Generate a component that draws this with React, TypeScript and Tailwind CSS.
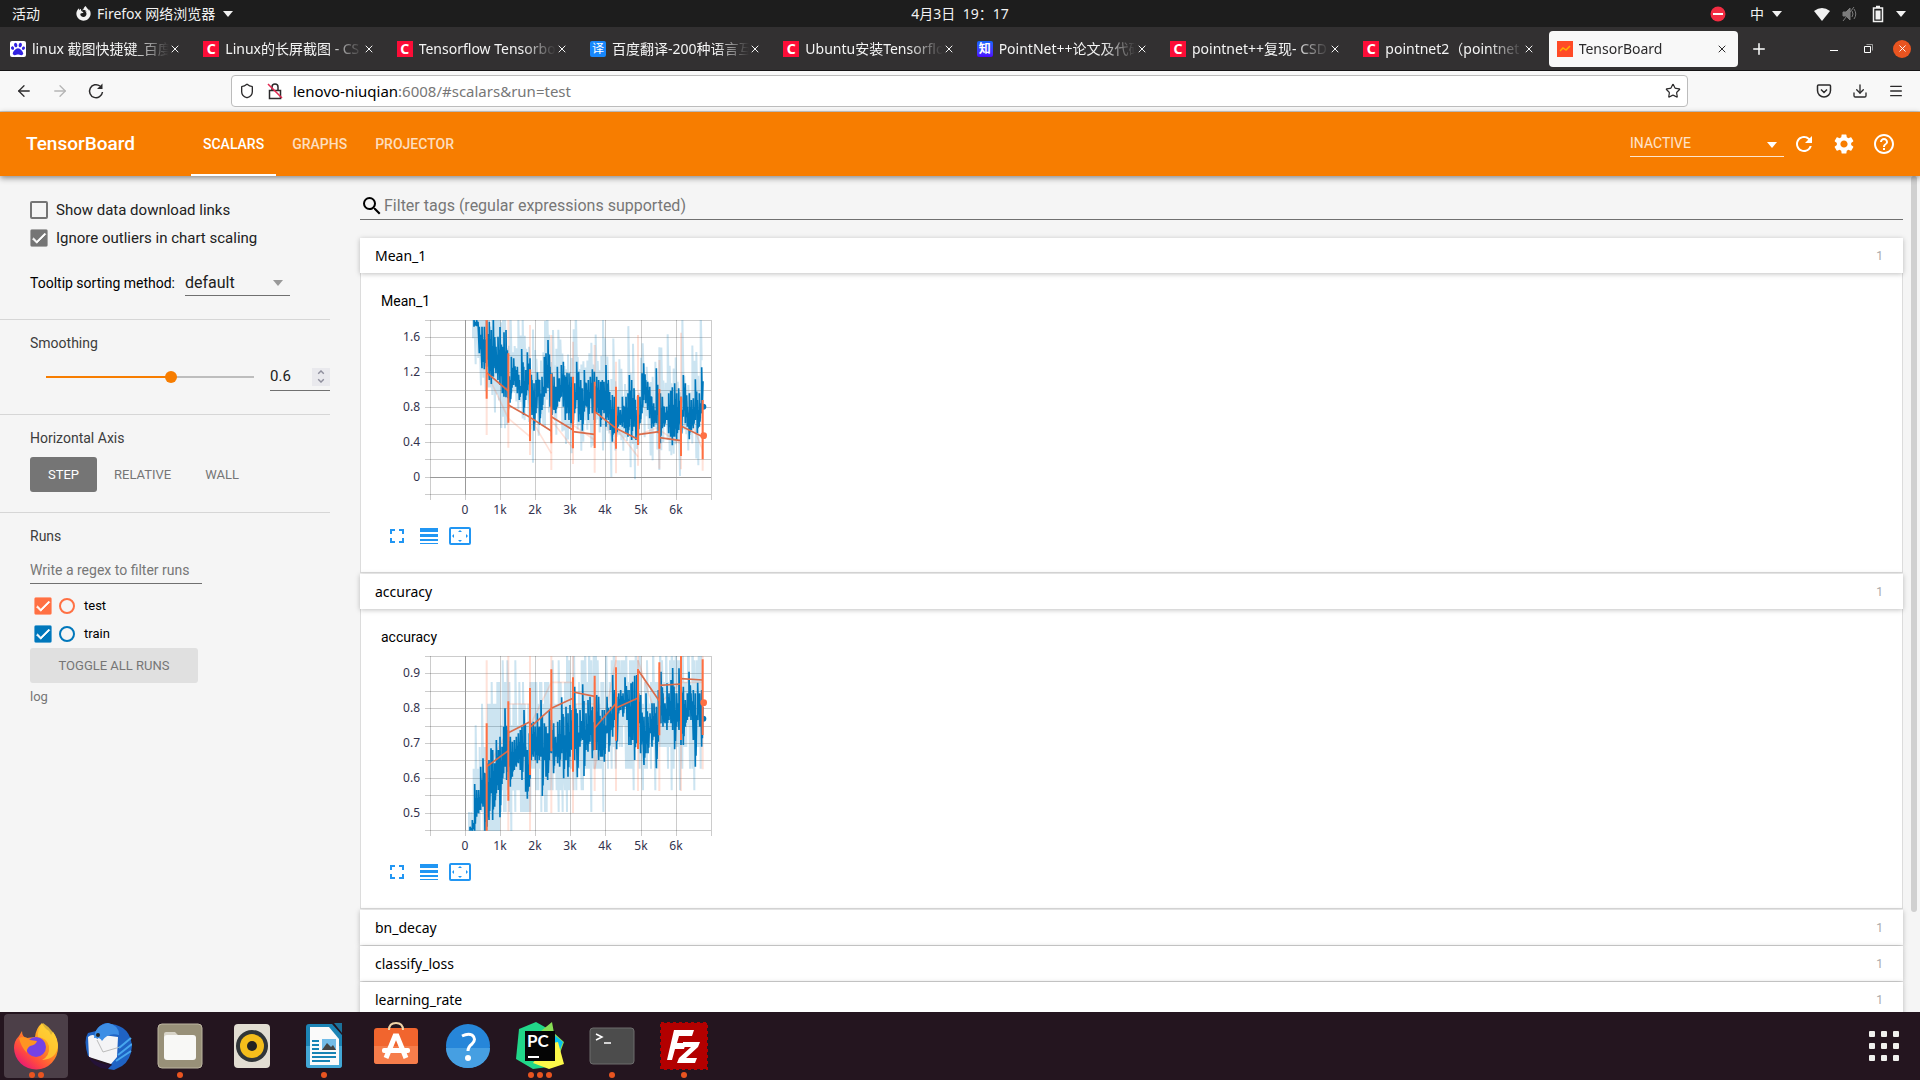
import type { ReactNode } from 'react';
import clsx from 'clsx';
import { ArrowLeft, ArrowRight, Download, Menu, Plus, Shield, Star, X } from 'lucide-react';
import { FaFirefoxBrowser, FaPaw } from 'react-icons/fa';
import { MdCheck, MdFullscreen, MdHelpOutline, MdLineWeight, MdRefresh, MdSearch, MdSettings } from 'react-icons/md';

type Point = [number, number];
// x, top, bottom
type Span = [number, number, number];

interface ChartData {
  top: number;
  yLabels: { text: string; y: number }[];
  zeroLine?: number;
  snap?: number;
  train: Span[];
  test: Span[];
  testRaw: Span[];
  links: [Point, Point][];
  rawLinks: [Point, Point][];
  trainDot: Point;
  testDot: Point;
}

const meanChart: ChartData = {
  top: 420,
  yLabels: [
    { text: '1.6', y: 26 },
    { text: '1.2', y: 61 },
    { text: '0.8', y: 96 },
    { text: '0.4', y: 131 },
    { text: '0', y: 166 },
  ],
  zeroLine: 166,
  train: [
    [372, 420, 440], [380, 420, 438], [388, 440, 520], [396, 440, 565], [403, 440, 568], [410, 420, 560], [418, 425, 600],
    [424, 450, 612], [430, 420, 590], [438, 500, 580], [444, 470, 600], [450, 441, 615], [457, 500, 640], [462, 457, 650],
    [468, 450, 652], [474, 560, 655], [480, 600, 668], [484, 530, 640], [491, 535, 615], [497, 570, 620], [502, 560, 640],
    [508, 600, 660], [515, 507, 640], [521, 560, 705], [527, 570, 660], [532, 517, 630], [540, 535, 700], [546, 600, 705],
    [552, 610, 752], [558, 600, 700], [562, 577, 650], [569, 600, 735], [576, 590, 690], [583, 530, 650], [588, 520, 640],
    [594, 480, 625], [600, 560, 680], [606, 580, 705], [612, 590, 690], [617, 620, 700], [622, 560, 680], [628, 595, 665],
    [634, 555, 650], [640, 545, 680], [646, 590, 720], [651, 578, 700], [657, 580, 720], [663, 590, 730], [668, 610, 740],
    [674, 610, 700], [680, 545, 660], [686, 575, 725], [692, 600, 720], [697, 625, 752], [703, 570, 695], [709, 610, 680],
    [715, 600, 720], [721, 590, 655], [727, 568, 700], [733, 575, 720], [740, 590, 700], [746, 600, 700], [752, 605, 740],
    [757, 600, 690], [762, 605, 700], [768, 555, 740], [775, 600, 720], [781, 660, 750], [787, 645, 785], [793, 650, 760],
    [799, 680, 770], [805, 680, 740], [811, 690, 735], [817, 650, 740], [823, 680, 745], [828, 650, 760], [834, 640, 770],
    [838, 585, 740], [845, 600, 780], [852, 625, 740], [858, 690, 780], [864, 680, 760], [870, 650, 730], [876, 580, 700],
    [881, 550, 660], [887, 600, 670], [893, 605, 690], [899, 620, 715], [905, 650, 745], [911, 670, 740], [919, 565, 730],
    [925, 640, 760], [931, 640, 790], [937, 650, 745], [943, 680, 740], [950, 680, 720], [956, 640, 760], [962, 632, 770],
    [967, 622, 796], [974, 610, 770], [980, 640, 780], [986, 625, 750], [993, 650, 780], [1000, 585, 710], [1006, 610, 730],
    [1012, 680, 740], [1018, 640, 778], [1024, 660, 750], [1030, 655, 745], [1036, 598, 720], [1042, 660, 760],
    [1048, 640, 740], [1055, 562, 700],
  ],
  test: [
    [410, 420, 656], [475, 520, 728], [540, 568, 783], [604, 582, 790], [669, 590, 805], [734, 605, 804],
    [798, 620, 806], [864, 645, 795], [928, 627, 806], [993, 650, 828], [1058, 660, 838],
  ],
  testRaw: [
    [410, 420, 765], [475, 420, 803], [540, 435, 825], [604, 465, 870], [669, 485, 852], [734, 495, 878],
    [798, 545, 880], [864, 465, 857], [928, 540, 866], [993, 458, 868], [1058, 660, 872],
  ],
  links: [
    [[410, 578], [475, 633]], [[475, 675], [540, 712]], [[540, 712], [604, 753]], [[604, 710], [669, 750]],
    [[669, 755], [734, 763]], [[734, 695], [798, 745]], [[798, 745], [864, 778]], [[864, 764], [928, 755]],
    [[928, 773], [993, 782]], [[993, 738], [1058, 770]],
  ],
  rawLinks: [
    [[410, 578], [475, 715]], [[475, 715], [540, 770]], [[540, 712], [604, 820]], [[604, 720], [669, 805]],
    [[669, 735], [734, 780]], [[734, 640], [798, 800]], [[798, 745], [864, 830]], [[864, 764], [928, 742]],
    [[928, 750], [993, 792]], [[993, 650], [1058, 810]],
  ],
  trainDot: [1060, 680],
  testDot: [1061, 767],
};

const accuracyChart: ChartData = {
  top: 288,
  snap: 65,
  yLabels: [
    { text: '0.9', y: 26 },
    { text: '0.8', y: 61 },
    { text: '0.7', y: 96 },
    { text: '0.6', y: 131 },
    { text: '0.5', y: 166 },
  ],
  train: [
    [360, 800, 812], [367, 780, 812], [374, 672, 812], [380, 690, 770], [386, 690, 760], [392, 620, 750], [399, 595, 740],
    [405, 640, 812], [411, 610, 800], [417, 600, 780], [423, 565, 700], [428, 570, 780], [434, 610, 740], [439, 540, 700],
    [445, 570, 690], [450, 530, 772], [456, 560, 672], [461, 500, 640], [465, 445, 620], [470, 500, 660], [475, 510, 620],
    [481, 530, 680], [487, 545, 650], [493, 540, 630], [499, 530, 620], [505, 520, 610], [511, 510, 630], [516, 500, 660],
    [522, 450, 590], [527, 560, 695], [532, 570, 716], [538, 520, 680], [544, 490, 600], [550, 485, 590], [556, 500, 600],
    [562, 460, 610], [568, 500, 600], [573, 420, 590], [577, 500, 708], [583, 490, 600], [588, 500, 650], [593, 520, 660],
    [598, 450, 600], [604, 480, 580], [611, 490, 640], [617, 530, 590], [623, 485, 610], [629, 480, 620], [635, 412, 580],
    [641, 470, 655], [648, 440, 600], [654, 460, 650], [660, 435, 590], [666, 450, 570], [674, 380, 600], [682, 460, 652],
    [690, 450, 560], [698, 373, 540], [702, 450, 648], [708, 460, 570], [714, 420, 575], [720, 410, 545], [727, 440, 595],
    [734, 410, 570], [740, 405, 570], [746, 410, 600], [752, 480, 590], [757, 450, 590], [763, 450, 605], [771, 410, 520],
    [777, 450, 575], [782, 440, 510], [788, 345, 530], [794, 390, 480], [800, 410, 568], [806, 400, 460], [812, 390, 450],
    [819, 400, 470], [825, 352, 440], [831, 390, 480], [837, 390, 555], [843, 370, 555], [848, 365, 540], [854, 347, 600],
    [860, 345, 550], [866, 400, 490], [872, 405, 580], [882, 470, 615], [888, 400, 580], [894, 470, 580], [900, 460, 520],
    [906, 430, 560], [912, 430, 530], [919, 440, 625], [925, 390, 545], [933, 335, 490], [939, 400, 500], [945, 430, 490],
    [951, 370, 510], [957, 400, 480], [963, 360, 490], [968, 324, 510], [974, 400, 568], [980, 400, 500], [987, 325, 510],
    [993, 330, 555], [1000, 380, 555], [1006, 420, 500], [1012, 400, 480], [1017, 335, 470], [1023, 400, 480],
    [1030, 390, 540], [1036, 400, 620], [1043, 368, 480], [1049, 400, 500], [1055, 390, 560],
  ],
  test: [
    [410, 490, 812], [475, 424, 722], [540, 384, 645], [604, 328, 574], [669, 352, 635], [734, 347, 570],
    [798, 322, 542], [864, 327, 567], [928, 307, 526], [993, 288, 540], [1058, 298, 525],
  ],
  testRaw: [
    [410, 301, 812], [475, 288, 812], [540, 288, 812], [604, 288, 759], [669, 288, 759], [734, 367, 693],
    [798, 288, 693], [864, 288, 693], [928, 320, 693], [993, 288, 693], [1058, 288, 628],
  ],
  links: [
    [[410, 620], [475, 572]], [[475, 518], [540, 485]], [[540, 502], [604, 445]], [[604, 445], [669, 415]],
    [[669, 396], [734, 409]], [[734, 504], [798, 430]], [[798, 444], [864, 414]], [[864, 330], [928, 423]],
    [[928, 376], [993, 372]], [[993, 356], [1058, 360]],
  ],
  rawLinks: [
    [[410, 628], [475, 510]], [[475, 432], [540, 432]], [[540, 497], [604, 367]], [[604, 367], [669, 367]],
    [[669, 432], [734, 432]], [[734, 628], [798, 300]], [[864, 301], [928, 497]], [[928, 432], [993, 367]],
    [[993, 367], [1058, 367]],
  ],
  trainDot: [1060, 476],
  testDot: [1061, 428],
};

// cheap repeatable noise in 0..1
const noise = (n: number) => {
  const v = Math.sin(n * 12.9898) * 43758.5453;
  return v - Math.floor(v);
};

function smoothPath(spans: Span[]) {
  return spans
    .map(([x, hi, lo], i) => {
      const h = lo - hi;
      return `${i ? 'L' : 'M'}${x} ${lo}L${x} ${hi}L${x + 2} ${lo - h * 0.15}L${x + 4} ${hi + h * 0.3}`;
    })
    .join('');
}

function rawPath(spans: Span[], snap?: number) {
  return spans
    .map(([x, hi, lo], i) => {
      let top = hi - noise(x) ** 2 * 190 - 10;
      let bottom = lo + noise(x + 7) ** 2 * 110 + 10;
      if (snap) {
        top = 301 + Math.floor((top - 301) / snap) * snap;
        bottom = 301 + Math.ceil((bottom - 301) / snap) * snap;
      }
      return `${i ? 'L' : 'M'}${x - 3} ${bottom}L${x - 3} ${top}L${x} ${(top + bottom) / 2}`;
    })
    .join('');
}

const segments = (spans: Span[]) => spans.map(([x, hi, lo]) => `M${x} ${hi}V${lo}`).join('');
const lines = (links: [Point, Point][]) => links.map(([a, b]) => `M${a[0]} ${a[1]}L${b[0]} ${b[1]}`).join('');

const GRID_X = [49, 84, 119, 154, 189, 224, 260, 295, 330];
const GRID_Y = [9, 26, 44, 61, 79, 96, 113, 131, 148, 166, 183];

function ScalarChart({ data, title }: { data: ChartData; title: string }) {
  return (
    <svg width="336" height="210" role="img" aria-label={`${title} chart`} className="block">
      <g stroke="#000" strokeOpacity="0.2" shapeRendering="crispEdges">
        {GRID_X.map((x) => (
          <line key={x} x1={x + 0.5} x2={x + 0.5} y1="9" y2="189" />
        ))}
        {GRID_Y.map((y) => (
          <line key={y} x1="44" x2="330" y1={y + 0.5} y2={y + 0.5} />
        ))}
      </g>
      <g stroke="#999" shapeRendering="crispEdges">
        <line x1="84.5" x2="84.5" y1="9" y2="183" />
        {data.zeroLine && <line x1="49" x2="330" y1={data.zeroLine + 0.5} y2={data.zeroLine + 0.5} />}
      </g>
      <svg x="49" y="9" width="281" height="175" viewBox={`240 ${data.top} 843 525`}>
        <g fill="none" strokeWidth="5">
          <path d={rawPath(data.train, data.snap)} stroke="#0077bb" strokeOpacity="0.2" strokeWidth="6" />
          <path d={segments(data.testRaw)} stroke="#ff7043" strokeOpacity="0.2" strokeWidth="6" />
          <path d={lines(data.rawLinks)} stroke="#ff7043" strokeOpacity="0.2" />
          <path d={smoothPath(data.train)} stroke="#0077bb" strokeLinejoin="bevel" />
          <circle cx={data.trainDot[0]} cy={data.trainDot[1]} r="9" fill="#0077bb" />
          <path d={lines(data.links)} stroke="#d96c4b" />
          <path d={segments(data.test)} stroke="#ff7043" strokeWidth="6" />
        </g>
        <circle cx={data.testDot[0]} cy={data.testDot[1]} r="10" fill="#ff7043" />
      </svg>
      <g className="fill-[#32324d] font-['Noto_Sans'] text-[12px]">
        {data.yLabels.map((l) => (
          <text key={l.text} x="39" y={l.y + 4} textAnchor="end">{l.text}</text>
        ))}
        {['0', '1k', '2k', '3k', '4k', '5k', '6k'].map((t, i) => (
          <text key={t} x={GRID_X[i + 1]} y="203" textAnchor="middle">{t}</text>
        ))}
      </g>
    </svg>
  );
}

/* ---------- desktop bar and browser ---------- */

function Caret({ className }: { className?: string }) {
  return (
    <svg viewBox="0 0 10 6" className={clsx('h-[6px] w-[10px] fill-current', className)}>
      <path d="M0 0h10L5 6z" />
    </svg>
  );
}

function TopBar() {
  return (
    <header className="relative flex h-[27px] shrink-0 items-center justify-between bg-[#1d1d1d] px-3 text-[14px] text-[#f2f2f2]">
      <div className="flex items-center">
        <button>活动</button>
        <button className="ml-9 flex items-center gap-[6px]">
          <FaFirefoxBrowser className="size-[15px]" />
          Firefox 网络浏览器
          <Caret className="ml-[2px]" />
        </button>
      </div>
      <time className="absolute left-1/2 -translate-x-1/2 whitespace-pre">4月3日  19：17</time>
      <div className="flex items-center">
        <svg viewBox="0 0 16 16" className="size-4">
          <circle cx="8" cy="8" r="7.500" fill="#f22c42" />
          <path d="M3 7h10v2H3z" fill="#fff" />
        </svg>
        <button className="ml-6 flex items-center gap-2">中 <Caret /></button>
        <svg viewBox="0 0 16 16" className="ml-8 size-4 fill-[#f2f2f2]">
          <path d="M8 15 0 5Q8-1 16 5z" />
        </svg>
        <svg viewBox="0 0 16 16" className="ml-3 size-4 text-[#7c7c7c]" fill="none" stroke="currentColor">
          <path d="M1 6h3l4-4v12L4 10H1z" fill="currentColor" />
          <path d="M10 5q2 3 0 6M12 3q3.500 5 0 10M1 15 12 1" />
        </svg>
        <svg viewBox="0 0 12 18" className="ml-[14px] h-[18px] w-3" fill="none" stroke="#f2f2f2" strokeWidth="1.500">
          <path d="M1.500 3h9v13.500h-9zM4 1.500h4" />
          <path d="M3.500 5.500h5v9h-5z" fill="#f2f2f2" stroke="none" />
        </svg>
        <Caret className="ml-3 mr-[2px]" />
      </div>
    </header>
  );
}

function CsdnIcon() {
  return <span className="flex size-4 items-center justify-center bg-[#fc0d37] text-[14px] font-bold leading-4 text-white">C</span>;
}

const tabs: { title: string; icon: ReactNode }[] = [
  {
    title: 'linux 截图快捷键_百度',
    icon: <span className="flex size-4 items-center justify-center rounded-xs bg-white text-[#3222e0]"><FaPaw className="size-[14px]" /></span>,
  },
  { title: 'Linux的长屏截图 - CS', icon: <CsdnIcon /> },
  { title: 'Tensorflow Tensorbo', icon: <CsdnIcon /> },
  {
    title: '百度翻译-200种语言互',
    icon: <span className="flex size-4 items-center justify-center rounded-xs bg-[#1787fb] text-[12px] leading-4 text-white">译</span>,
  },
  { title: 'Ubuntu安装Tensorflo', icon: <CsdnIcon /> },
  {
    title: 'PointNet++论文及代码',
    icon: <span className="flex size-4 items-center justify-center rounded-xs bg-linear-to-b from-[#0f62fe] to-[#4a00ff] text-[12px] font-bold leading-4 text-white">知</span>,
  },
  { title: 'pointnet++复现- CSD', icon: <CsdnIcon /> },
  { title: 'pointnet2（pointnet', icon: <CsdnIcon /> },
  {
    title: 'TensorBoard',
    icon: (
      <svg viewBox="0 0 16 16" className="size-4">
        <path d="M0 0h16v16H0z" fill="#ff4a26" />
        <path d="m3 10 3-3 3 2 4-4" fill="none" stroke="#ffb000" strokeWidth="1.500" />
      </svg>
    ),
  },
];

function TabStrip() {
  return (
    <div className="flex h-11 shrink-0 items-center border-b border-[#151415] bg-[#323031] pl-[2px] pr-[9px]">
      <div className="flex min-w-0 flex-[1_1_0] gap-1">
        {tabs.map((tab, i) => {
          const active = i === tabs.length - 1;
          return (
            <div
              key={tab.title}
              className={clsx(
                'flex h-9 min-w-0 flex-1 items-center rounded-sm pl-2 pr-[10px] text-[14px]',
                active ? 'bg-[#f8f8f8] text-[#2b2a2b]' : 'text-[#f4f4f4]',
              )}
            >
              <span className="shrink-0">{tab.icon}</span>
              <button className="ml-[6px] min-w-0 flex-1 overflow-hidden whitespace-nowrap text-left mask-r-from-75% mask-r-to-100%">
                {tab.title}
              </button>
              <button aria-label={`Close ${tab.title}`}><X className="size-3" strokeWidth={2} /></button>
            </div>
          );
        })}
      </div>
      <div className="ml-3 flex w-[161px] items-center text-white">
        <button aria-label="New tab"><Plus className="size-[18px]" strokeWidth={2} /></button>
        <button aria-label="Minimize" className="ml-auto mt-1 h-px w-2 bg-white" />
        <button aria-label="Restore" className="ml-[26px]">
          <svg viewBox="0 0 9 9" className="size-[9px]" fill="none" stroke="#fff">
            <path d="M.5 2.500h6v6h-6z" />
            <path d="M2.500.5h6v6" strokeOpacity="0.5" />
          </svg>
        </button>
        <button aria-label="Close window" className="ml-[20px] flex size-[18px] items-center justify-center rounded-full bg-[#e95420]">
          <X className="size-[11px]" strokeWidth={2} />
        </button>
      </div>
    </div>
  );
}

function Toolbar() {
  return (
    <div className="flex h-[41px] shrink-0 items-center border-b border-[#ccc] bg-[#f8f8f8] pr-4 text-[#2b2a2b]">
      <div className="flex w-[231px] shrink-0 gap-[18px] pl-[15px]">
        <button aria-label="Back"><ArrowLeft className="size-[18px]" strokeWidth={1.7} /></button>
        <button aria-label="Forward" className="text-[#b5b5b5]"><ArrowRight className="size-[18px]" strokeWidth={1.7} /></button>
        <button aria-label="Reload">
          <svg viewBox="0 0 18 18" className="size-[18px]" fill="none" stroke="currentColor" strokeWidth="1.500">
            <path d="M15.500 10A6.500 6.500 0 1 1 13 4" />
            <path d="M15.500 1.500V7H10z" fill="currentColor" stroke="none" />
          </svg>
        </button>
      </div>
      <div className="flex h-8 flex-1 items-center rounded-sm border border-[#bcbcbc] bg-white pl-[7px] pr-[6px]">
        <Shield className="size-4 shrink-0" strokeWidth={2} />
        <svg viewBox="0 0 16 18" className="ml-3 h-[18px] w-4 shrink-0" fill="none" stroke="currentColor" strokeWidth="1.500">
          <path d="M2.500 8.500h11v8h-11zM5 8V5a3 3 0 0 1 6 0v3" />
          <path d="m1 2 14 14" stroke="#e22850" />
        </svg>
        <div className="ml-[10px] flex flex-1 text-[15px]">
          <label className="text-black" htmlFor="url">lenovo-niuqian</label>
          <input id="url" defaultValue=":6008/#scalars&run=test" className="flex-1 bg-transparent text-[#777] outline-none" />
        </div>
        <button aria-label="Bookmark"><Star className="size-4" strokeWidth={1.8} /></button>
      </div>
      <div className="flex w-[216px] shrink-0 items-center justify-end gap-5">
        <button aria-label="Pocket">
          <svg viewBox="0 0 16 16" className="size-4" fill="none" stroke="currentColor" strokeWidth="1.500">
            <path d="M2.500 2h11q1 0 1 1v4.500a6.500 6.500 0 0 1-13 0V3q0-1 1-1zM5 6.500l3 3 3-3" />
          </svg>
        </button>
        <button aria-label="Downloads"><Download className="size-4" strokeWidth={2} /></button>
        <button aria-label="Menu"><Menu className="size-4" strokeWidth={2} /></button>
      </div>
    </div>
  );
}

/* ---------- TensorBoard ---------- */

function AppHeader() {
  return (
    <header className="relative z-10 flex h-16 shrink-0 items-center bg-[#f77d00] pr-6 text-white shadow-[0_2px_6px_rgba(0,0,0,0.45)]">
      <h1 className="w-[191px] pl-[26px] text-[19px] font-medium">TensorBoard</h1>
      <nav className="flex h-full gap-1 text-[14px] font-medium">
        <a href="#scalars" className="flex items-center border-b-2 border-white px-3 pt-[2px]">SCALARS</a>
        <a href="#graphs" className="flex items-center px-3 text-white/75">GRAPHS</a>
        <a href="#projector" className="flex items-center px-3 text-white/75">PROJECTOR</a>
      </nav>
      <div className="relative ml-auto w-[154px] border-b border-white/80">
        <select aria-label="Inactive plugins" className="block h-6 w-full appearance-none text-[14px] text-white/80">
          <option>INACTIVE</option>
        </select>
        <Caret className="pointer-events-none absolute right-[7px] top-[10px]" />
      </div>
      <div className="ml-2 flex gap-4">
        <button aria-label="Reload data"><MdRefresh className="size-6" /></button>
        <button aria-label="Settings"><MdSettings className="size-6" /></button>
        <button aria-label="Help"><MdHelpOutline className="size-6" /></button>
      </div>
    </header>
  );
}

function CheckBox({ id, checked, tone }: { id: string; checked?: boolean; tone: string }) {
  return (
    <span className="relative flex size-[18px] shrink-0">
      <input
        id={id}
        type="checkbox"
        defaultChecked={checked}
        className={clsx('peer size-[18px] appearance-none rounded-[2px] border-2', tone)}
      />
      <MdCheck className="pointer-events-none absolute inset-0 hidden size-[18px] stroke-1 text-white peer-checked:block" />
    </span>
  );
}

const runs = [
  { name: 'test', box: 'border-[#ff7043] bg-[#ff7043]', ring: 'border-[#ff7043]' },
  { name: 'train', box: 'border-[#0077bb] bg-[#0077bb]', ring: 'border-[#0077bb]' },
];

function Sidebar() {
  return (
    <aside className="w-[330px] shrink-0 text-[14px] text-[#3c3c3c]">
      <section className="border-b border-[#d6d6d6] pb-[23px] pl-[30px] pt-[25px]">
        <div className="flex items-center gap-2 text-[15px] text-[#212121]">
          <CheckBox id="links" tone="border-[#757575]" />
          <label htmlFor="links" className="leading-[18px]">Show data download links</label>
        </div>
        <div className="mt-[10px] flex items-center gap-2 text-[15px] text-[#212121]">
          <CheckBox id="outliers" checked tone="border-[#757575] bg-[#757575]" />
          <label htmlFor="outliers" className="leading-[18px]">Ignore outliers in chart scaling</label>
        </div>
        <div className="mt-6 flex items-center gap-[10px] text-black">
          <label htmlFor="sorting" className="whitespace-nowrap">Tooltip sorting method:</label>
          <div className="relative w-[105px] border-b border-[#707070]">
            <select id="sorting" className="block h-6 w-full appearance-none text-[16px] text-[#212121]">
              <option>default</option>
            </select>
            <Caret className="pointer-events-none absolute right-[7px] top-[9px] text-[#999]" />
          </div>
        </div>
      </section>

      <section className="border-b border-[#d6d6d6] pb-[23px] pl-[30px] pt-[13px]">
        <h2 className="leading-5">Smoothing</h2>
        <div className="mt-[10px] flex items-center pl-[10px]">
          <input
            type="range"
            aria-label="Smoothing"
            min="0"
            max="1"
            step="0.001"
            defaultValue="0.6"
            className="h-4 w-[220px] appearance-none bg-[linear-gradient(to_right,#f77d00_60%,#bdbdbd_60%)] bg-[length:208px_2px] bg-center bg-no-repeat [&::-webkit-slider-thumb]:size-3 [&::-webkit-slider-thumb]:appearance-none [&::-webkit-slider-thumb]:rounded-full [&::-webkit-slider-thumb]:bg-[#f77d00]"
          />
          <div className="ml-[10px] flex h-7 w-[60px] items-center border-b border-[#707070]">
            <input
              type="number"
              aria-label="Smoothing value"
              defaultValue="0.6"
              className="min-w-0 flex-1 text-[15px] text-[#212121] [appearance:textfield] [&::-webkit-inner-spin-button]:appearance-none"
            />
            <button aria-label="Step value" className="flex h-[18px] w-[18px] items-center justify-center bg-[#e9e9ed]">
              <svg viewBox="0 0 8 14" className="h-[13px] w-2" fill="none" stroke="#8f8f9d" strokeWidth="1.500">
                <path d="m1 4 3-3 3 3M1 10l3 3 3-3" />
              </svg>
            </button>
          </div>
        </div>
      </section>

      <section className="border-b border-[#d6d6d6] pb-5 pl-[30px] pt-[13px]">
        <h2 className="leading-5">Horizontal Axis</h2>
        <div className="mt-[9px] flex h-[35px] text-[13px] text-[#757575]">
          <button className="w-[67px] rounded-[3px] bg-[#757575] text-white">STEP</button>
          <button className="ml-[2px] px-[15px]">RELATIVE</button>
          <button className="ml-1 px-[15px]">WALL</button>
        </div>
      </section>

      <section className="pl-[30px] pt-[13px]">
        <h2 className="leading-5">Runs</h2>
        <label className="sr-only" htmlFor="regex">Filter runs</label>
        <input
          id="regex"
          placeholder="Write a regex to filter runs"
          className="mt-[10px] block h-7 w-[172px] border-b border-[#707070] placeholder:text-[#777]"
        />
        <div className="mt-[13px] flex flex-col gap-[10px] pl-1 text-[13px] text-black">
          {runs.map((run) => (
            <div key={run.name} className="flex items-center">
              <CheckBox id={run.name} checked tone={run.box} />
              <span className={clsx('ml-[7px] size-4 rounded-full border-2', run.ring)} />
              <label htmlFor={run.name} className="ml-[9px] leading-[18px]">{run.name}</label>
            </div>
          ))}
        </div>
        <button className="mt-[5px] block h-[35px] w-[168px] rounded-[3px] bg-[#e0e0e0] text-[13px] text-[#757575]">TOGGLE ALL RUNS</button>
        <p className="mt-1 text-[13px] leading-5 text-[#757575]">log</p>
      </section>
    </aside>
  );
}

function ChartActions() {
  return (
    <div className="mt-[6px] flex h-[18px] items-center gap-2 pl-1 text-[#2196f3]">
      <button aria-label="Toggle size"><MdFullscreen className="size-6" /></button>
      <button aria-label="Toggle y-axis log scale"><MdLineWeight className="size-6" /></button>
      <button aria-label="Fit domain to data">
        <svg viewBox="0 0 22 18" className="h-[18px] w-[22px] fill-current">
          <rect x="1" y="1" width="20" height="16" rx="1" fill="none" stroke="currentColor" strokeWidth="2" />
          <path d="M11 3 13 5H9zM11 15 9 13h4zM3 9l2-2v4zM19 9l-2 2V7z" />
        </svg>
      </button>
    </div>
  );
}

function Category({ name, chart }: { name: string; chart?: ChartData }) {
  return (
    <section className={chart ? 'mb-px' : 'mb-px'}>
      <button className="relative flex h-[35px] w-full items-center justify-between bg-white pl-[15px] pr-5 text-left shadow-[0_1px_5px_rgba(0,0,0,0.25)]">
        <span className="font-['Noto_Sans'] text-[14px] text-black">{name}</span>
        <span className="text-[12px] text-[#aaa]">1</span>
      </button>
      {chart && (
        <div className="border border-t-0 border-[#dcdcdc] bg-white pb-[27px] pl-5 pt-[18px]">
          <h3 className="text-[14px] leading-5 text-black">{name}</h3>
          <ScalarChart data={chart} title={name} />
          <ChartActions />
        </div>
      )}
    </section>
  );
}

function Dashboard() {
  return (
    <main className="ml-[30px] min-w-0 flex-1 pt-4">
      <div className="flex h-7 items-center border-b border-[#707070]">
        <MdSearch className="size-6 text-black" />
        <input
          aria-label="Filter tags"
          placeholder="Filter tags (regular expressions supported)"
          className="h-full flex-1 text-[16px] placeholder:text-[#777]"
        />
      </div>
      <div className="mt-[18px]">
        <Category name="Mean_1" chart={meanChart} />
        <Category name="accuracy" chart={accuracyChart} />
        <Category name="bn_decay" />
        <Category name="classify_loss" />
        <Category name="learning_rate" />
      </div>
    </main>
  );
}

/* ---------- dock ---------- */

const dockApps: { name: string; dots: number; icon: ReactNode }[] = [
  {
    name: 'Firefox',
    dots: 2,
    icon: (
      <>
        <defs>
          <linearGradient id="fx" x1="1" y1="0" x2="0.2" y2="1">
            <stop offset="0" stopColor="#fff44f" />
            <stop offset="0.4" stopColor="#ff9a1f" />
            <stop offset="0.75" stopColor="#ff4a3f" />
            <stop offset="1" stopColor="#e5127d" />
          </linearGradient>
        </defs>
        <path d="M10 9q0 6 5 7l8-1q1-9 7-14 2 5 7 8l2 4 2-3q5 6 5 15a22 22 0 0 1-44 1q0-7 5-12z" fill="url(#fx)" />
        <circle cx="24" cy="25" r="10" fill="#7542e5" />
        <path d="M7 16q6-3 11 2l7 1q-1 4-7 5-4 3-3 7-6-6-8-15z" fill="#ff9422" />
        <path d="M31 1q-6 7-5 14 9 1 11 9 1 10-7 14 15-1 16-15Q44 9 31 1z" fill="#ffcf33" fillOpacity="0.8" />
      </>
    ),
  },
  {
    name: 'Thunderbird',
    dots: 0,
    icon: (
      <>
        <path d="M15 5Q21-1 27 2q19 2 21 22-1 14-10 20l-8 4-6-1 4-5L4 34Q-1 18 4 11l8-2z" fill="#1f63c4" />
        <path d="M4 15q6-5 9 2l6-4 15 2-1 20-6 7L5 35z" fill="#f4f4f6" />
        <path d="m13 18 6 12 17-5" fill="none" stroke="#bbb" />
        <path d="M10 16q1-13 14-15 11 2 11 12-11-3-17 6-2-4-8-3z" fill="#3d8ee5" />
        <path d="M4 34q9 8 24 9l-5 4Q9 46 4 34z" fill="#241238" />
        <path d="M47 16 35 26M48 22 34 33M47 29 32 39" stroke="#48a7ee" strokeWidth="2" />
        <circle cx="14" cy="13" r="2" fill="#222" />
      </>
    ),
  },
  {
    name: 'Files',
    dots: 1,
    icon: (
      <>
        <rect x="2" y="2" width="44" height="44" rx="4" fill="#989078" stroke="#bcb5a0" />
        <path d="M8 12q0-2 2-2h9l3 3h8v10H8z" fill="#d8d4c8" />
        <rect x="8" y="13" width="32" height="25" rx="3" fill="#f8f8f6" />
      </>
    ),
  },
  {
    name: 'Rhythmbox',
    dots: 0,
    icon: (
      <>
        <rect x="6" y="2" width="36" height="44" rx="4" fill="#e2ddd2" />
        <circle cx="24" cy="24" r="16" fill="#303538" />
        <circle cx="24" cy="24" r="12" fill="#f4bd1b" />
        <circle cx="24" cy="24" r="5" fill="#222" />
      </>
    ),
  },
  {
    name: 'LibreOffice Writer',
    dots: 1,
    icon: (
      <>
        <path d="M9 2h23l10 11v30q0 3-3 3H9q-3 0-3-3V5q0-3 3-3z" fill="#1c84b5" />
        <path d="M6 24h36v19q0 3-3 3H9q-3 0-3-3z" fill="#43a7d5" />
        <path d="M10 5h19l10 12v26H10z" fill="#fafafa" />
        <path d="M34 1h8v10z" fill="#1c7099" />
        <path d="M12 19h7M12 23h7M12 27h7M12 31h24M12 35h24M12 39h18" stroke="#1683b4" strokeWidth="2" />
        <path d="M22 17h14v11H22z" fill="#72bce8" />
        <path d="m22 28 5-7 4 4 2-2 3 5z" fill="#444" />
      </>
    ),
  },
  {
    name: 'Ubuntu Software',
    dots: 0,
    icon: (
      <>
        <rect x="2" y="6" width="44" height="36" rx="3" fill="#f1652e" />
        <path d="M2 24h44v15q0 3-3 3H5q-3 0-3-3z" fill="#f67d4b" />
        <path d="M17 8q0-7 7-7t7 7" fill="none" stroke="#f2d4a8" strokeWidth="2" />
        <path d="m14 36 9-22h2l9 22" fill="none" stroke="#fff" strokeWidth="5" />
        <rect x="10" y="26" width="28" height="5" rx="2" fill="#fff" />
      </>
    ),
  },
  {
    name: 'Help',
    dots: 0,
    icon: (
      <>
        <circle cx="24" cy="24" r="22" fill="#2686d9" />
        <path d="M2 26a22 20 0 0 0 44 0z" fill="#469fe2" />
        <path d="M18 14q6-3 10-1 5 4 0 9-4 3-4 7" fill="none" stroke="#fff" strokeWidth="3" />
        <circle cx="24" cy="36" r="3" fill="#fff" />
      </>
    ),
  },
  {
    name: 'PyCharm',
    dots: 3,
    icon: (
      <>
        <path d="M3 7 20 0l16 9-4 36-15 2L0 37z" fill="#21d789" />
        <path d="m25 9 11-9 2 11 10 9-4 11-9 14-10-22z" fill="#87dd54" />
        <path d="m37 12 10 8-4 10-8-4z" fill="#07c3f2" />
        <path d="m31 22 11-2 6 22-15 5-16-6z" fill="#fcf84a" />
        <path d="M9 9h30v30H9z" fill="#050505" />
        <path d="M12 34h11v2H12z" fill="#fff" />
        <text x="11" y="25" className="fill-white font-['Lato'] text-[17px] font-bold">PC</text>
      </>
    ),
  },
  {
    name: 'Terminal',
    dots: 1,
    icon: (
      <>
        <rect x="2" y="6" width="44" height="36" rx="3" fill="#4c4c4c" stroke="#6d6d6d" />
        <path d="m8 12 6 3-6 3M16 21h7" fill="none" stroke="#fff" strokeWidth="1.500" />
      </>
    ),
  },
  {
    name: 'FileZilla',
    dots: 1,
    icon: (
      <>
        <path d="M1 1h46v46H1z" fill="#b30000" stroke="#b30000" strokeWidth="2" strokeDasharray="3 3" />
        <path d="M7 38 14 8h20l-2 6H19l-2 7h9l-2 6h-9l-3 11z" fill="#fff" />
        <path d="M23 20h17l-2 5-12 11h11l-2 5H17l2-5 12-11h-8z" fill="#fff" />
      </>
    ),
  },
];

function Dock() {
  return (
    <footer className="flex h-[68px] shrink-0 items-center bg-[#24151f] pl-1 pr-[21px]">
      <div className="flex gap-2">
        {dockApps.map((app, i) => (
          <button
            key={app.name}
            aria-label={app.name}
            className={clsx('relative flex size-16 items-center justify-center rounded-sm', i === 0 && 'bg-[#4c3f48]')}
          >
            <svg viewBox="0 0 48 48" className="size-12">{app.icon}</svg>
            <span className="absolute bottom-0 flex gap-[3px]">
              {Array.from({ length: app.dots }, (_, d) => (
                <span key={d} className="size-[6px] rounded-full bg-[#e95420]" />
              ))}
            </span>
          </button>
        ))}
      </div>
      <button aria-label="Show applications" className="ml-auto grid grid-cols-3 gap-[6px]">
        {Array.from({ length: 9 }, (_, i) => (
          <span key={i} className="size-[6px] rounded-[1px] bg-[#f0f0ee]" />
        ))}
      </button>
    </footer>
  );
}

export default function App() {
  return (
    <div className="flex h-screen flex-col overflow-hidden font-['Noto_Sans','Noto_Sans_CJK_SC',sans-serif]">
      <TopBar />
      <TabStrip />
      <Toolbar />
      <div className="flex min-h-0 flex-1 flex-col bg-[#f5f5f5] font-['Roboto','Noto_Sans_CJK_SC',sans-serif]">
        <AppHeader />
        <div className="flex min-h-0 flex-1 overflow-hidden">
          <Sidebar />
          <Dashboard />
          <div className="ml-2 w-[9px] shrink-0">
            <div className="h-[88%] w-[6px] rounded-full bg-[#d0d0d0]" />
          </div>
        </div>
      </div>
      <Dock />
    </div>
  );
}
